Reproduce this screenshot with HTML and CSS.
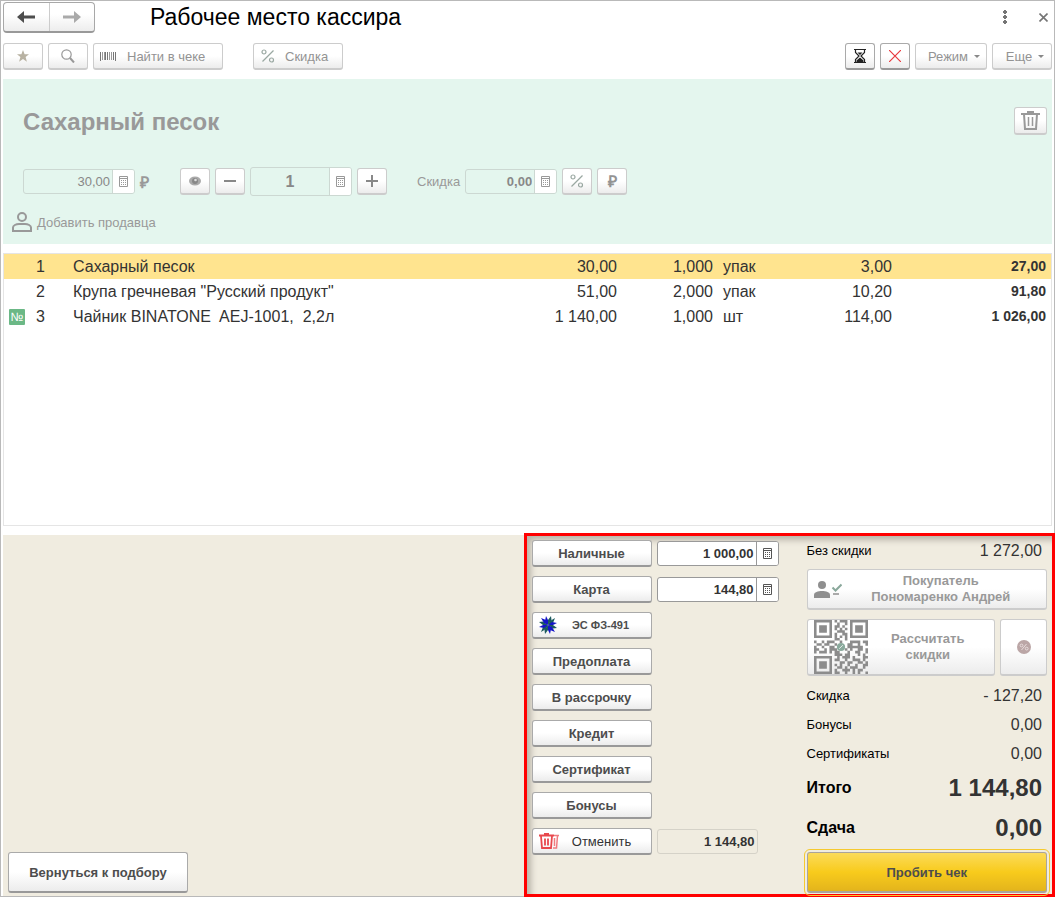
FILE: index.html
```html
<!DOCTYPE html>
<html lang="ru">
<head>
    <meta charset="UTF-8">
    <meta name="viewport" content="width=device-width, initial-scale=1.0">
    <title>Рабочее место кассира</title>
    <link rel="stylesheet" href="styles.css">
</head>
<body>
    <svg class="sprite" aria-hidden="true">
        <symbol id="calc" viewBox="0 0 9 11">
            <path d="M.5.5h8v10h-8zM0 2.5h9" fill="none" stroke="currentColor"/>
            <path d="M2 4.5h1m1 0h1m1 0h1M2 6.5h1m1 0h1m1 0h1M2 8.5h1m1 0h1m1 0h1" stroke="currentColor"/>
        </symbol>
        <symbol id="percent" viewBox="0 0 14 14">
            <path d="M12.5 1.5l-11 11" fill="none" stroke="currentColor" stroke-width="1.2"/>
            <circle cx="3" cy="3" r="2" fill="none" stroke="currentColor" stroke-width="1.2"/>
            <circle cx="10.5" cy="11" r="2" fill="none" stroke="currentColor" stroke-width="1.2"/>
        </symbol>
    </svg>
    <div class="app">
        <header class="header">
            <div class="nav">
                <button type="button" class="nav-button" aria-label="Назад">
                    <svg width="18" height="12" viewBox="0 0 18 12"><path d="M0 6l7-6v4.5h11v3H7V12z" fill="#4d4d4d"/></svg>
                </button>
                <button type="button" class="nav-button" aria-label="Вперед">
                    <svg width="18" height="12" viewBox="0 0 18 12"><path d="M18 6l-7-6v4.5H0v3h11V12z" fill="#aaa"/></svg>
                </button>
            </div>
            <h1 class="title">Рабочее место кассира</h1>
            <button type="button" class="plain" aria-label="Меню">
                <svg width="4" height="14" viewBox="0 0 4 14"><path d="M0 1h1V0h2v1h1v2H3v1H1V3H0zM0 6h1V5h2v1h1v2H3v1H1V8H0zM0 11h1v-1h2v1h1v2H3v1H1v-1H0z" fill="#757575"/></svg>
            </button>
            <button type="button" class="plain close" aria-label="Закрыть">
                <svg width="9" height="9" viewBox="0 0 9 9"><path d="M.5.5l8 8M8.5.5l-8 8" stroke="#757575" stroke-width="1.6"/></svg>
            </button>
        </header>

        <div class="toolbar">
            <button type="button" class="button off star" aria-label="Избранное">
                <svg width="12" height="12" viewBox="0 0 12 12"><path d="M6 0l1.6 4.2H12L8.6 7l1.3 4.8L6 9l-3.9 2.800L3.400 7 0 4.200h4.400z" fill="#b8b2a2"/></svg>
            </button>
            <button type="button" class="button off star" aria-label="Поиск">
                <svg width="14" height="14" viewBox="0 0 14 14"><circle cx="5.5" cy="5.5" r="4.7" fill="none" stroke="#999" stroke-width="1.2"/><path d="M9 9l4 4.5" stroke="#999" stroke-width="2"/></svg>
            </button>
            <button type="button" class="button off find">
                <svg width="16" height="9" viewBox="0 0 16 9"><path d="M.5 0v9M15.5 0v9M5.5 0v8M7.5 0v8M13.5 0v8" stroke="#777"/><path d="M2.5 0v8M4.5 0v8M9.5 0v8M11.5 0v8" stroke="#999"/></svg>
                Найти в чеке
            </button>
            <button type="button" class="button off discount">
                <svg class="percent" width="14" height="14"><use href="#percent"/></svg>
                Скидка
            </button>
            <button type="button" class="button small push" aria-label="Отложить чек">
                <svg width="12" height="14" viewBox="0 0 12 14"><path d="M0 .5h12M0 13.5h12" stroke="#222"/><path d="M1.5 1v2.5L5 7l-3.500 3.500V13M10.500 1v2.500L7 7l3.500 3.500V13" fill="none" stroke="#222" stroke-width="1.2"/><path d="M3.500 3.500h5L6 6zM6 8.500l3.500 3V13h-7v-1.500z" fill="#222"/></svg>
            </button>
            <button type="button" class="button small" aria-label="Аннулировать">
                <svg width="12" height="12" viewBox="0 0 12 12"><path d="M0 0l12 12M12 0L0 12" stroke="#e8383d" stroke-width="1.2"/></svg>
            </button>
            <button type="button" class="button off drop">Режим<span class="caret"></span></button>
            <button type="button" class="button off drop more">Еще<span class="caret"></span></button>
        </div>

        <section class="editor">
            <div class="editor-head">
                <h2 class="product">Сахарный песок</h2>
                <button type="button" class="button off trash" aria-label="Удалить строку">
                    <svg width="19" height="19" viewBox="0 0 19 19"><path d="M0 3h19M6 1h7" stroke="#999" stroke-width="2"/><path d="M3 3l1 15h11l1-15" fill="none" stroke="#999" stroke-width="2"/><path d="M7.5 6v9M11.5 6v9" stroke="#999" stroke-width="1.5"/></svg>
                </button>
            </div>
            <div class="editor-row">
                <div class="field off price">
                    <input type="text" value="30,00" aria-label="Цена">
                    <button type="button" aria-label="Калькулятор"><svg width="9" height="11"><use href="#calc"/></svg></button>
                </div>
                <span class="currency">₽</span>
                <button type="button" class="button off small" aria-label="Просмотр">
                    <svg width="12" height="10" viewBox="0 0 12 10"><ellipse cx="6" cy="5" rx="6" ry="4.5" fill="#aaa"/><circle cx="6" cy="5" r="3" fill="#888"/><circle cx="6.5" cy="4" r="1.3" fill="#ddd"/></svg>
                </button>
                <button type="button" class="button off small" aria-label="Меньше">
                    <svg width="12" height="12" viewBox="0 0 12 12"><path d="M0 6h12" stroke="#888" stroke-width="2"/></svg>
                </button>
                <div class="field off quantity">
                    <input type="text" value="1" aria-label="Количество">
                    <button type="button" aria-label="Калькулятор"><svg width="9" height="11"><use href="#calc"/></svg></button>
                </div>
                <button type="button" class="button off small" aria-label="Больше">
                    <svg width="12" height="12" viewBox="0 0 12 12"><path d="M0 6h12M6 0v12" stroke="#888" stroke-width="2"/></svg>
                </button>
                <label class="field-label" for="discount">Скидка</label>
                <div class="field off percent-field">
                    <input type="text" id="discount" value="0,00">
                    <button type="button" aria-label="Калькулятор"><svg width="9" height="11"><use href="#calc"/></svg></button>
                </div>
                <button type="button" class="button off small" aria-label="Процент">
                    <svg class="percent" width="14" height="14"><use href="#percent"/></svg>
                </button>
                <button type="button" class="button off small ruble">₽</button>
            </div>
            <a class="seller" href="#">
                <svg width="20" height="20" viewBox="0 0 20 20"><circle cx="10" cy="5" r="4" fill="none" stroke="#999" stroke-width="2"/><path d="M1 19v-3.500c0-2 3-3.500 6-3.500h6c3 0 6 1.500 6 3.500V19z" fill="none" stroke="#999" stroke-width="2"/></svg>
                Добавить продавца
            </a>
        </section>

        <div class="goods">
            <table class="goods-table">
                <colgroup>
                    <col class="col-mark"><col class="col-num"><col><col class="col-price"><col class="col-count"><col class="col-unit"><col class="col-disc"><col class="col-sum">
                </colgroup>
                <tbody>
                    <tr class="selected">
                        <td></td><td>1</td><td class="name">Сахарный песок</td><td class="number">30,00</td><td class="number">1,000</td><td class="unit">упак</td><td class="number">3,00</td><td class="number sum">27,00</td>
                    </tr>
                    <tr>
                        <td></td><td>2</td><td class="name">Крупа гречневая "Русский продукт"</td><td class="number">51,00</td><td class="number">2,000</td><td class="unit">упак</td><td class="number">10,20</td><td class="number sum">91,80</td>
                    </tr>
                    <tr>
                        <td><span class="mark">№</span></td><td>3</td><td class="name">Чайник BINATONE&nbsp; AEJ-1001,&nbsp; 2,2л</td><td class="number">1 140,00</td><td class="number">1,000</td><td class="unit">шт</td><td class="number">114,00</td><td class="number sum">1 026,00</td>
                    </tr>
                </tbody>
            </table>
        </div>

        <footer class="bottom">
            <div class="back">
                <button type="button" class="button bold back-button">Вернуться к подбору</button>
            </div>
            <section class="payment">
                <div class="methods">
                    <button type="button" class="button bold">Наличные</button>
                    <div class="field">
                        <input type="text" value="1 000,00" aria-label="Наличные">
                        <button type="button" aria-label="Калькулятор"><svg width="9" height="11"><use href="#calc"/></svg></button>
                    </div>
                    <button type="button" class="button bold">Карта</button>
                    <div class="field">
                        <input type="text" value="144,80" aria-label="Карта">
                        <button type="button" aria-label="Калькулятор"><svg width="9" height="11"><use href="#calc"/></svg></button>
                    </div>
                    <button type="button" class="button bold with-icon certificate">
                        <svg width="18" height="18" viewBox="-9 -9 18 18">
                            <g fill="#1c5a5e">
                                <path d="M0 0L0-5 3-9 3.500-5zM0 0L5 0 9 3 5 3.500zM0 0L0 5-3 9-3.500 5zM0 0L-5 0-9-3-5-3.500z"/>
                                <path d="M0 0L2-4 7-7 5-2zM0 0L-2 4-7 7-5 2z"/>
                            </g>
                            <g fill="#1414c8">
                                <path d="M0 0L-3-4-2-9 0-5zM0 0L4-3 9-2 5 0zM0 0L3 4 2 9 0 5zM0 0L-4 3-9 2-5 0z"/>
                                <path d="M0 0L4 2 7 7 2 5zM0 0L-4-2-7-7-2-5z"/>
                            </g>
                        </svg>
                        <span>ЭС ФЗ-491</span>
                    </button>
                    <button type="button" class="button bold">Предоплата</button>
                    <button type="button" class="button bold">В рассрочку</button>
                    <button type="button" class="button bold">Кредит</button>
                    <button type="button" class="button bold">Сертификат</button>
                    <button type="button" class="button bold">Бонусы</button>
                    <button type="button" class="button with-icon">
                        <svg width="20" height="16" viewBox="0 0 20 16"><path d="M0 2.500h15M5 .8h5" stroke="#e8484d" stroke-width="1.800"/><path d="M2 3l1 12h9l1-12M6 5.500v7M9 5.500v7" fill="none" stroke="#e8484d" stroke-width="1.800"/><path d="M15 2.500h5M18.500 3l-1 12H14M15.500 5v8" fill="none" stroke="#f07c80" stroke-width="1.500"/></svg>
                        <span>Отменить</span>
                    </button>
                    <div class="field total-field">
                        <input type="text" value="1 144,80" aria-label="Всего оплачено" readonly>
                    </div>
                </div>

                <div class="summary">
                    <div class="line first"><span>Без скидки</span><span class="value">1 272,00</span></div>
                    <button type="button" class="button off bold buyer">
                        <svg width="28" height="17" viewBox="0 0 28 17"><circle cx="8" cy="4" r="4" fill="#8f8f8f"/><path d="M0 17v-3c0-3 4-4 8-4s8 1 8 4v3z" fill="#8f8f8f"/><path d="M18.500 6.500l3 3 6-6" fill="none" stroke="#8aa89b" stroke-width="2"/><path d="M19 13h6" stroke="#8f8f8f" stroke-width="1.500"/></svg>
                        <span>Покупатель<br>Пономаренко Андрей</span>
                    </button>
                    <div class="calc-row">
                        <button type="button" class="button off bold calc-discount">
                            <svg width="54" height="54" viewBox="0 0 21 21">
                                <path d="M.5.5h6v6h-6zM14.500.5h6v6h-6zM.5 14.500h6v6h-6z" fill="none" stroke="#8c8c8c"/>
                                <path d="M2 2h3v3H2zM16 2h3v3h-3zM2 16h3v3H2z" fill="#8c8c8c"/>
                                <path d="M8 .5h1m1 0h3M9 1.500h1m2 0h1M8 2.500h2m1 0h1M8 3.500h1m1 0h1m1 0h1M9 4.500h3M8 5.500h1m2 0h2M8 6.500h1m1 0h1m1 0h1M8 7.500h2m2 0h1M0 8.500h1m2 0h1m1 0h3m2 0h1m3 0h4m1 0h2M1 9.500h2m1 0h2m2 0h1m4 0h2m2 0h1m2 0h1M0 10.500h1m2 0h1m2 0h2m5 0h6M0 11.500h2m2 0h1m1 0h3m3 0h1m1 0h1m2 0h2m1 0h1M0 12.500h1m1 0h3m1 0h1m1 0h2m3 0h1m2 0h2m2 0h1M8 13.500h3m1 0h2m3 0h1m1 0h1M9 14.500h1m1 0h3m1 0h1m3 0h2M8 15.500h2m2 0h1m2 0h3m1 0h1M10 16.500h2m1 0h2m2 0h2m1 0h1M8 17.500h1m1 0h1m2 0h1m2 0h1m2 0h2M9 18.500h2m1 0h1m1 0h3m2 0h1M8 19.500h1m2 0h3m1 0h1m1 0h2M8 20.500h2m2 0h1m2 0h1m1 0h1m2 0h1" fill="none" stroke="#8c8c8c"/>
                                <circle cx="10.500" cy="10.500" r="1.600" fill="#8aaa9d"/>
                                <path d="M9.800 11.200l1.400-1.400" stroke="#fff" stroke-width=".3"/>
                            </svg>
                            <span>Рассчитать<br>скидки</span>
                        </button>
                        <button type="button" class="button off show-discount" aria-label="Показать скидки">
                            <svg width="14" height="14" viewBox="0 0 14 14"><circle cx="7" cy="7" r="7" fill="#bba6a6"/><path d="M9.500 4l-5 6" stroke="#e8dcdc"/><circle cx="4.500" cy="5.500" r="1.400" fill="none" stroke="#e8dcdc"/><circle cx="9.700" cy="8.600" r="1.400" fill="none" stroke="#e8dcdc"/></svg>
                        </button>
                    </div>
                    <div class="line"><span>Скидка</span><span class="value">- 127,20</span></div>
                    <div class="line"><span>Бонусы</span><span class="value">0,00</span></div>
                    <div class="line"><span>Сертификаты</span><span class="value">0,00</span></div>
                    <div class="line big"><span>Итого</span><span class="value">1 144,80</span></div>
                    <div class="line big"><span>Сдача</span><span class="value">0,00</span></div>
                    <button type="button" class="button bold submit">Пробить чек</button>
                </div>
            </section>
        </footer>
    </div>
</body>
</html>
```
FILE: styles.css
```css
* {
    box-sizing: border-box;
}
body {
    margin: 0;
    background-color: #fff;
    color: #333;
    font-family: "Liberation Sans", Arial, sans-serif;
    font-size: 13px;
}
button, input {
    font: inherit;
    color: inherit;
}
button {
    cursor: pointer;
}
svg {
    display: block;
    flex: none;
}
.sprite {
    display: none;
}
.app {
    display: flex;
    flex-direction: column;
    min-height: 100vh;
    padding: 1px 2px 0;
    border: 1px solid #b9b9b9;
}

/* header */
.header {
    display: flex;
    align-items: center;
    height: 30px;
}
.nav {
    display: flex;
    width: 92px;
    height: 31px;
    border: 1px solid #a8a8a8;
    border-bottom: 2px solid #999;
    border-radius: 4px;
    background: linear-gradient(#fff 40%, #ededed);
}
.nav-button {
    display: flex;
    flex: 1;
    align-items: center;
    justify-content: center;
    padding: 0;
    border: none;
    background: none;
}
.nav-button + .nav-button {
    border-left: 1px solid #ccc;
}
.title {
    flex: 1;
    margin: 0 0 0 55px;
    color: #000;
    font-size: 23px;
    font-weight: normal;
    line-height: 30px;
}
.plain {
    padding: 0;
    border: none;
    background: none;
}
.close {
    margin: 0 4px 0 32px;
}

/* buttons */
.button {
    display: flex;
    align-items: center;
    justify-content: center;
    height: 27px;
    padding: 0;
    border: 1px solid #aaa;
    border-bottom: 2px solid #999;
    border-radius: 3px;
    background: linear-gradient(#fff 50%, #ececec);
    color: #333;
}
.button.off {
    border-color: #ccc;
    color: #939393;
}
.button.bold {
    color: #4d4d4d;
    font-weight: bold;
}
.button.off.bold {
    color: #999;
}
.small {
    width: 30px;
}
.percent {
    color: #9aa8a2;
}
.toolbar {
    display: flex;
    gap: 5px;
    margin: 11px 0 9px;
}
.star {
    width: 40px;
}
.find {
    justify-content: flex-start;
    gap: 11px;
    width: 130px;
    padding-left: 6px;
}
.discount {
    justify-content: flex-start;
    gap: 10px;
    width: 90px;
    margin-left: 25px;
    padding-left: 7px;
}
.push {
    margin-left: auto;
}
.drop {
    gap: 6px;
    width: 72px;
    padding-left: 6px;
}
.more {
    width: 60px;
}
.caret {
    border: 3px solid transparent;
    border-top-color: #888;
    border-bottom: none;
}

/* selected product */
.editor {
    height: 165px;
    padding: 28px 5px 0 20px;
    background-color: #e4f6ee;
}
.editor-head {
    display: flex;
    justify-content: space-between;
    align-items: center;
    height: 28px;
}
.product {
    margin: 0;
    padding-top: 2px;
    color: #999;
    font-size: 24px;
}
.trash {
    width: 33px;
    height: 28px;
}
.editor-row {
    display: flex;
    align-items: center;
    gap: 5px;
    margin: 32px 0 16px;
    color: #999;
}
.field {
    display: flex;
    height: 25px;
    border: 1px solid #999;
    border-radius: 3px;
    background-color: #fff;
    color: #333;
    font-weight: bold;
    overflow: hidden;
}
.field input {
    flex: 1;
    min-width: 0;
    padding: 0 2px;
    border: none;
    background: none;
    text-align: right;
}
.field button {
    display: flex;
    align-items: center;
    justify-content: center;
    width: 22px;
    padding: 0;
    border: none;
    border-left: 1px solid #999;
    background-color: #fff;
    color: #555;
}
.field.off {
    border-color: #ccd8d2;
    background-color: #e4f6ee;
    color: #888;
}
.field.off button {
    border-color: #ccd8d2;
    color: #999;
}
.price {
    width: 112px;
    font-weight: normal;
}
.currency {
    width: 35px;
    font-size: 16px;
    font-weight: bold;
}
.quantity {
    width: 102px;
    height: 29px;
    font-size: 16px;
}
.quantity input {
    text-align: center;
}
.field-label {
    margin-left: 25px;
}
.percent-field {
    width: 92px;
}
.ruble {
    font-size: 16px;
    font-weight: bold;
}
.seller {
    display: inline-flex;
    align-items: center;
    gap: 5px;
    margin-left: -11px;
    color: #999;
    text-decoration: none;
}

/* goods */
.goods {
    flex: 1;
    margin: 9px 0;
    border: 1px solid #e5e5e5;
}
.goods-table {
    width: 100%;
    table-layout: fixed;
    border-collapse: collapse;
    font-size: 16px;
}
.goods-table td {
    height: 25px;
    padding: 0;
    line-height: 25px;
    white-space: nowrap;
}
.goods-table .selected {
    background-color: #ffe48f;
}
.goods-table .name {
    padding-left: 23px;
}
.goods-table .number {
    text-align: right;
}
.goods-table .unit {
    padding-left: 10px;
}
.goods-table .sum {
    padding-right: 5px;
    font-size: 14px;
    font-weight: bold;
}
.col-mark {
    width: 32px;
}
.col-num {
    width: 14px;
}
.col-price {
    width: 100px;
}
.col-count {
    width: 96px;
}
.col-unit {
    width: 80px;
}
.col-disc {
    width: 99px;
}
.col-sum {
    width: 159px;
}
.mark {
    display: block;
    width: 16px;
    height: 16px;
    margin-left: 5px;
    border-radius: 1px;
    background-color: #6bb886;
    color: #fff;
    font-size: 12px;
    line-height: 16px;
    text-align: center;
}

/* bottom panel */
.bottom {
    display: grid;
    grid-template-columns: 1fr 1fr;
    background-color: #f0ece0;
}
.back {
    display: flex;
    align-items: flex-end;
    padding: 0 0 3px 5px;
}
.back-button {
    width: 180px;
    height: 41px;
}
.payment {
    display: flex;
    gap: 28px;
    margin: -2px -3px -1px -4px;
    padding: 4px 5px 1px;
    border: 3px solid #f00;
    background-color: #f0ece0;
    box-shadow: inset 5px 5px 6px -1px #b8b3a8;
}
.methods {
    display: grid;
    grid-template-columns: 120px 122px;
    grid-auto-rows: 27px;
    gap: 9px 5px;
    align-items: center;
    align-content: start;
}
.methods .button {
    grid-column: 1;
}
.with-icon {
    justify-content: flex-start;
    padding: 0 6px;
}
.with-icon span {
    flex: 1;
    text-align: center;
}
.certificate {
    font-size: 11px;
}
.total-field {
    width: 101px;
    border-color: #d5d2c8;
    background-color: #f0ece0;
}
.summary {
    flex: 1;
}
.line {
    display: flex;
    align-items: center;
    justify-content: space-between;
    height: 29px;
    padding-right: 5px;
    color: #000;
}
.line.first {
    height: 21px;
    margin-bottom: 8px;
}
.value {
    color: #333;
    font-size: 16px;
}
.big {
    height: 40px;
    font-size: 16px;
    font-weight: bold;
}
.big .value {
    font-size: 24px;
}
.buyer {
    width: 100%;
    height: 41px;
    padding: 0 6px;
    line-height: 16px;
}
.buyer span, .calc-discount span {
    flex: 1;
    text-align: center;
}
.calc-row {
    display: flex;
    gap: 5px;
    margin: 9px 0 5px;
}
.calc-discount {
    flex: 1;
    height: 57px;
    padding: 0 6px;
    line-height: 16px;
}
.show-discount {
    width: 47px;
    height: 57px;
}
.submit {
    width: 100%;
    height: 41px;
    margin-top: 4px;
    border-color: #aaa49a;
    outline: 1px solid #f5c92f;
    outline-offset: 2px;
    background: linear-gradient(#fbdb5a, #f8cb1c 50%, #e3b41c);
}
```
